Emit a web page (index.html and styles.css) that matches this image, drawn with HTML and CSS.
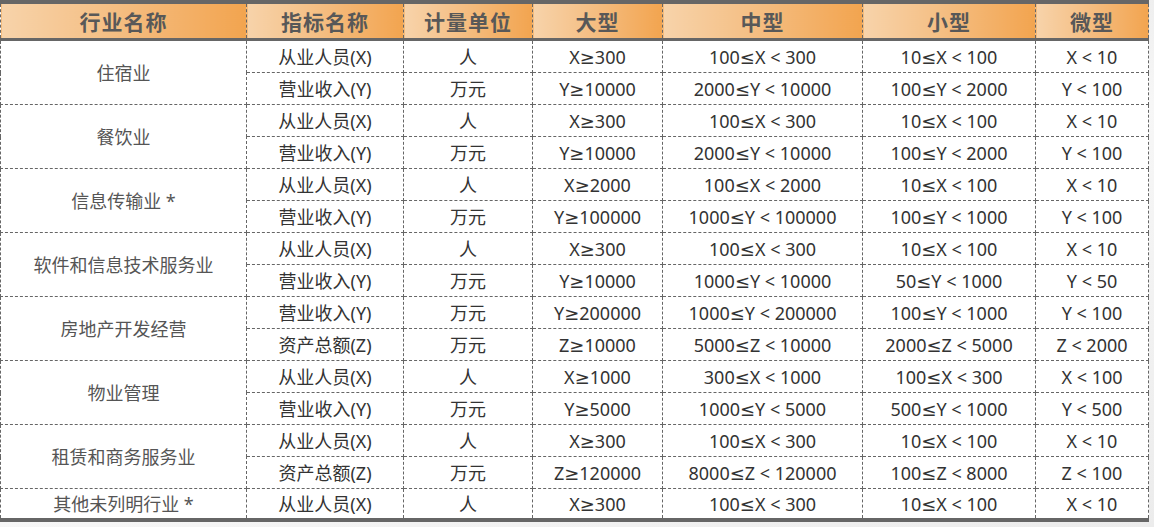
FILE: index.html
```html
<!DOCTYPE html>
<html lang="zh-CN">
<head>
<meta charset="utf-8">
<title>行业划分标准</title>
<link rel="stylesheet" href="styles.css">
</head>
<body>
<div class="page">
<table class="std">
  <colgroup>
    <col class="c1"><col class="c2"><col class="c3"><col class="c4"><col class="c5"><col class="c6"><col class="c7">
  </colgroup>
  <thead>
    <tr>
      <th>行业名称</th><th>指标名称</th><th>计量单位</th><th>大型</th><th>中型</th><th>小型</th><th>微型</th>
    </tr>
  </thead>
  <tbody>
    <tr><td class="ind" rowspan="2">住宿业</td><td>从业人员(X)</td><td>人</td><td>X≥300</td><td>100≤X &lt; 300</td><td>10≤X &lt; 100</td><td>X &lt; 10</td></tr>
    <tr><td>营业收入(Y)</td><td>万元</td><td>Y≥10000</td><td>2000≤Y &lt; 10000</td><td>100≤Y &lt; 2000</td><td>Y &lt; 100</td></tr>
    <tr><td class="ind" rowspan="2">餐饮业</td><td>从业人员(X)</td><td>人</td><td>X≥300</td><td>100≤X &lt; 300</td><td>10≤X &lt; 100</td><td>X &lt; 10</td></tr>
    <tr><td>营业收入(Y)</td><td>万元</td><td>Y≥10000</td><td>2000≤Y &lt; 10000</td><td>100≤Y &lt; 2000</td><td>Y &lt; 100</td></tr>
    <tr><td class="ind" rowspan="2">信息传输业 *</td><td>从业人员(X)</td><td>人</td><td>X≥2000</td><td>100≤X &lt; 2000</td><td>10≤X &lt; 100</td><td>X &lt; 10</td></tr>
    <tr><td>营业收入(Y)</td><td>万元</td><td>Y≥100000</td><td>1000≤Y &lt; 100000</td><td>100≤Y &lt; 1000</td><td>Y &lt; 100</td></tr>
    <tr><td class="ind" rowspan="2">软件和信息技术服务业</td><td>从业人员(X)</td><td>人</td><td>X≥300</td><td>100≤X &lt; 300</td><td>10≤X &lt; 100</td><td>X &lt; 10</td></tr>
    <tr><td>营业收入(Y)</td><td>万元</td><td>Y≥10000</td><td>1000≤Y &lt; 10000</td><td>50≤Y &lt; 1000</td><td>Y &lt; 50</td></tr>
    <tr><td class="ind" rowspan="2">房地产开发经营</td><td>营业收入(Y)</td><td>万元</td><td>Y≥200000</td><td>1000≤Y &lt; 200000</td><td>100≤Y &lt; 1000</td><td>Y &lt; 100</td></tr>
    <tr><td>资产总额(Z)</td><td>万元</td><td>Z≥10000</td><td>5000≤Z &lt; 10000</td><td>2000≤Z &lt; 5000</td><td>Z &lt; 2000</td></tr>
    <tr><td class="ind" rowspan="2">物业管理</td><td>从业人员(X)</td><td>人</td><td>X≥1000</td><td>300≤X &lt; 1000</td><td>100≤X &lt; 300</td><td>X &lt; 100</td></tr>
    <tr><td>营业收入(Y)</td><td>万元</td><td>Y≥5000</td><td>1000≤Y &lt; 5000</td><td>500≤Y &lt; 1000</td><td>Y &lt; 500</td></tr>
    <tr><td class="ind" rowspan="2">租赁和商务服务业</td><td>从业人员(X)</td><td>人</td><td>X≥300</td><td>100≤X &lt; 300</td><td>10≤X &lt; 100</td><td>X &lt; 10</td></tr>
    <tr><td>资产总额(Z)</td><td>万元</td><td>Z≥120000</td><td>8000≤Z &lt; 120000</td><td>100≤Z &lt; 8000</td><td>Z &lt; 100</td></tr>
    <tr class="last"><td class="ind">其他未列明行业 *</td><td>从业人员(X)</td><td>人</td><td>X≥300</td><td>100≤X &lt; 300</td><td>10≤X &lt; 100</td><td>X &lt; 10</td></tr>
  </tbody>
</table>
</div>
</body>
</html>
```
FILE: styles.css
```css
html, body {
  margin: 0;
  padding: 0;
}
body {
  background: #f0f0f0;
  font-family: "Noto Sans", "DejaVu Sans", "Noto Sans CJK SC", sans-serif;
  width: 1154px;
  height: 527px;
  overflow: hidden;
}
.page {
  background: linear-gradient(160deg, #f2f2f2 0%, #ebebeb 40%, #f7f7f7 55%, #ececec 100%);
  height: 527px;
}
.std {
  border-collapse: collapse;
  table-layout: fixed;
  width: 1148px;
  background: #fff;
  border-top: 4px solid #666;
  border-bottom: 4px solid #666;
}
.c1 { width: 246px; }
.c2 { width: 157px; }
.c3 { width: 129px; }
.c4 { width: 130px; }
.c5 { width: 200px; }
.c6 { width: 173px; }
.c7 { width: 113px; }
.std th {
  height: 34px;
  padding: 0;
  background: linear-gradient(to right, #f7d3aa 0%, #f4bc7f 50%, #f2a44f 100%);
  color: #585858;
  font-family: "Noto Sans CJK SC", sans-serif;
  font-size: 21px;
  font-weight: 700;
  letter-spacing: 1px;
  border-left: 1px dashed #666;
  border-right: 1px dashed #666;
  border-bottom: 3px solid #666;
  line-height: 34px;
}
.std td {
  height: 30px;
  padding: 1px 0 0;
  text-align: center;
  font-size: 18px;
  line-height: 30px;
  color: #333;
  border: 1px dashed #666;
  white-space: nowrap;
  overflow: hidden;
}
.std td.ind {
  color: #555;
}
.std tr.last td {
  height: 28px;
  line-height: 28px;
}
```
